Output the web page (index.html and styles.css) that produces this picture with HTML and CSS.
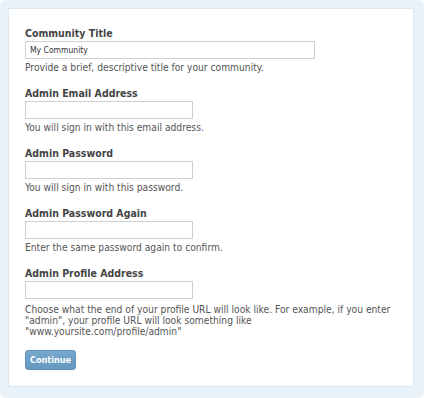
FILE: index.html
```html
<!DOCTYPE html>
<html>

<head>
    <title>Install</title>
    <meta charset="utf-8">
    <link rel="stylesheet" href="styles.css">
</head>

<body>
    <div class="wrap">
        <form class="panel">
            <div class="field">
                <label class="label">Community Title</label>
                <input class="text wide" type="text" value="My Community">
                <p class="hint">Provide a brief, descriptive title for your community.</p>
            </div>
            <div class="field">
                <label class="label">Admin Email Address</label>
                <input class="text" type="text">
                <p class="hint">You will sign in with this email address.</p>
            </div>
            <div class="field">
                <label class="label">Admin Password</label>
                <input class="text" type="password">
                <p class="hint">You will sign in with this password.</p>
            </div>
            <div class="field">
                <label class="label">Admin Password Again</label>
                <input class="text" type="password">
                <p class="hint">Enter the same password again to confirm.</p>
            </div>
            <div class="field last">
                <label class="label">Admin Profile Address</label>
                <input class="text" type="text">
                <p class="hint">Choose what the end of your profile URL will look like. For example, if you enter "admin", your profile URL will look something like "www.yoursite.com/profile/admin"</p>
            </div>
            <div class="actions">
                <button class="button" type="button">Continue</button>
            </div>
        </form>
    </div>
</body>

</html>
```

FILE: styles.css
```css
html, body {
    margin: 0;
    padding: 0;
    background: #fff;
}

body {
    width: 424px;
    height: 398px;
    font-family: Verdana, "DejaVu Sans Condensed", "DejaVu Sans", sans-serif;
    font-stretch: condensed;
    color: #444;
}

.wrap {
    box-sizing: border-box;
    height: 398px;
    padding: 8px 10px 11px 8px;
    background: #e9f2f9;
    border-radius: 6px;
    display: flex;
}

.panel {
    flex: 1;
    margin: 0;
    padding: 17px 10px 0 16px;
    background: #fff;
    border: 1px solid #dce8f1;
    display: flex;
    flex-direction: column;
}

.field {
    margin-bottom: 13px;
}

.field.last .hint {
    margin-top: 5px;
}

.label {
    display: block;
    font-size: 10.5px;
    font-weight: bold;
    line-height: 15px;
    color: #444;
}

.text {
    display: block;
    box-sizing: border-box;
    width: 168px;
    height: 18px;
    margin: 0;
    padding: 0 4px;
    border: 1px solid #cfcfcf;
    font-family: "DejaVu Sans Condensed", "DejaVu Sans", sans-serif;
    font-stretch: condensed;
    font-size: 8.5px;
    color: #333;
    background: #fff;
}

.wide {
    width: 290px;
}

.hint {
    margin: 3px 0 0 0;
    font-size: 10.2px;
    line-height: 11px;
    color: #555;
}

.actions {
    margin-top: -2px;
}

.button {
    box-sizing: border-box;
    width: 51px;
    height: 20px;
    padding: 0;
    border: 1px solid #5f93bb;
    border-radius: 3px;
    background: linear-gradient(#76a8cd, #6599c0);
    color: #fff;
    font-family: "DejaVu Sans Condensed", "DejaVu Sans", sans-serif;
    font-stretch: condensed;
    font-size: 9px;
    font-weight: bold;
}
```
